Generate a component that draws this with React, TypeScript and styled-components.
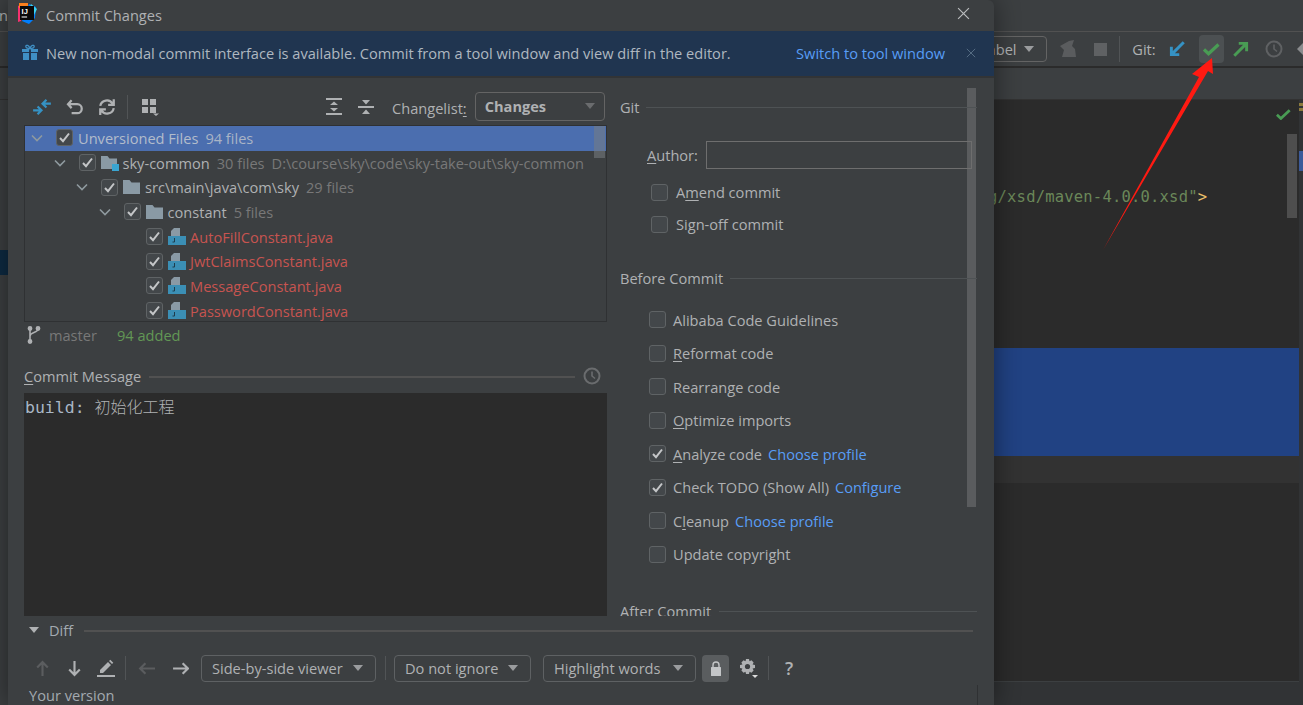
import React from "react";
import styled, { createGlobalStyle } from "styled-components";

const Global = createGlobalStyle`
  html, body { margin: 0; padding: 0; background: #2b2b2b; overflow: hidden; }
  * { box-sizing: border-box; }
`;

const Page = styled.div`
  position: relative;
  width: 1303px;
  height: 705px;
  overflow: hidden;
  display: flex;
  flex-direction: column;
  background: #2b2b2b;
  font-family: "Open Sans", "Noto Sans", sans-serif;
  font-size: 14.6px;
  color: #afb1b3;
`;

/* ---------- IDE behind the dialog ---------- */
const IdeTitle = styled.div`
  height: 32px;
  flex: none;
  background: #3c3f41;
  border-bottom: 1px solid #515151;
  line-height: 30px;
  margin-left: -1px;
`;
const IdeToolbar = styled.div`
  height: 36px;
  flex: none;
  display: flex;
  align-items: center;
  padding-left: 975px;
  background: #3c3f41;
  border-bottom: 2px solid #2b2b2b;
`;
const IdeCombo = styled.div`
  width: 72px;
  height: 26px;
  flex: none;
  display: flex;
  align-items: center;
  justify-content: space-between;
  padding: 0 12px 0 4px;
  border: 1px solid #646464;
  border-radius: 4px;
  color: #afb1b3;
`;
const Caret = styled.span<{ $c?: string }>`
  width: 0;
  height: 0;
  border-left: 5.5px solid transparent;
  border-right: 5.5px solid transparent;
  border-top: 6px solid ${(p) => p.$c || "#9a9c9e"};
  flex: none;
`;
const ToolSlot = styled.span<{ $w: number; $ml?: number; $active?: boolean }>`
  width: ${(p) => p.$w}px;
  height: 28px;
  margin-left: ${(p) => p.$ml || 0}px;
  flex: none;
  display: flex;
  align-items: center;
  justify-content: center;
  border-radius: 4px;
  background: ${(p) => (p.$active ? "#4c5052" : "transparent")};
  color: #afb1b3;
`;
const VSep = styled.span<{ $h?: number; $ml?: number; $mr?: number }>`
  width: 1px;
  height: ${(p) => p.$h || 24}px;
  flex: none;
  margin-left: ${(p) => p.$ml || 0}px;
  margin-right: ${(p) => p.$mr || 0}px;
  background: #515456;
`;
const IdeTabs = styled.div`
  height: 32px;
  flex: none;
  background: #3c3f41;
  border-bottom: 1px solid #323232;
`;
const IdeBody = styled.div`
  flex: 1;
  min-height: 0;
  display: flex;
`;
const SideEdge = styled.div`
  width: 994px;
  flex: none;
  background: #3c3f41;
  padding-top: 150px;
`;
const SideSelection = styled.div`
  width: 8px;
  height: 25px;
  background: #0d2a42;
`;
const Editor = styled.div`
  position: relative;
  flex: 1;
  display: flex;
  flex-direction: column;
  background: #2b2b2b;
`;
const CodeLine = styled.div`
  height: 20px;
  margin-top: 87px;
  margin-left: -6px;
  font-family: "DejaVu Sans Mono", "Liberation Mono", monospace;
  font-size: 15.5px;
  line-height: 20px;
  letter-spacing: 0.2px;
  color: #6a8759;
  white-space: nowrap;
`;
const Amber = styled.span`
  color: #e8bf6a;
`;
const SelectionBand = styled.div`
  height: 108px;
  margin-top: 141px;
  margin-right: 4px;
  background: #214283;
`;
const CurrentLine = styled.div`
  height: 27px;
  margin-right: 4px;
  background: #323232;
`;
const EditorFill = styled.div`
  flex: 1;
`;
const StatusBar = styled.div`
  height: 24px;
  flex: none;
  background: #313335;
  border-top: 1px solid #3c3f41;
`;
const EditorCheck = styled.span`
  position: absolute;
  left: 282px;
  top: 9px;
  display: flex;
`;
const EditorScroll = styled.div`
  position: absolute;
  right: 6px;
  top: 34px;
  width: 10px;
  height: 84px;
  background: #4e4e4e;
`;
const Stripe = styled.div`
  position: absolute;
  right: 0;
  top: 0;
  width: 4px;
  height: 100%;
  background: #313335;
`;
const Mark = styled.div<{ $top: number; $h: number; $c: string }>`
  position: absolute;
  left: 0;
  width: 4px;
  top: ${(p) => p.$top}px;
  height: ${(p) => p.$h}px;
  background: ${(p) => p.$c};
`;

/* ---------- dialog ---------- */
const Dialog = styled.div`
  position: absolute;
  left: 8px;
  top: 0;
  width: 986px;
  height: 705px;
  display: flex;
  flex-direction: column;
  background: #3c3f41;
  border-top-right-radius: 6px;
  box-shadow: 0 0 26px rgba(0, 0, 0, 0.45);
  overflow: hidden;
`;
const TitleRow = styled.div`
  height: 31px;
  flex: none;
  display: flex;
  align-items: center;
  padding: 0 24px 4px 9px;
`;
const TitleText = styled.span`
  margin-left: 9px;
  margin-top: 3px;
`;
const CloseBtn = styled.span`
  margin-left: auto;
  display: flex;
`;
const Banner = styled.div`
  height: 47px;
  flex: none;
  display: flex;
  align-items: center;
  padding: 0 18px 2px 14px;
  background: #203550;
  border-bottom: 2px solid #323436;
  color: #afb8c0;
`;
const BannerText = styled.span`
  margin-left: 8px;
`;
const Link = styled.a`
  color: #589df6;
`;
const BannerLink = styled(Link)`
  margin-left: auto;
`;
const BannerClose = styled.span`
  margin-left: 21px;
  display: flex;
`;
const Body = styled.div`
  flex: none;
  height: 538px;
  display: flex;
  overflow: hidden;
`;
const LeftCol = styled.div`
  width: 583px;
  margin-left: 16px;
  flex: none;
  display: flex;
  flex-direction: column;
`;
const TreeToolbar = styled.div`
  height: 47px;
  flex: none;
  display: flex;
  align-items: center;
  padding: 10px 0 0 2px;
`;
const ChangelistLabel = styled.span`
  margin-left: 10px;
  margin-top: 3px;
`;
const U = styled.span`
  text-decoration: underline;
  text-underline-offset: 2px;
  text-decoration-thickness: 1px;
`;
const ChangeCombo = styled.div`
  width: 130px;
  height: 29px;
  margin-left: 8px;
  margin-top: -1px;
  padding: 0 9px 1px;
  display: flex;
  align-items: center;
  justify-content: space-between;
  border: 1px solid #646464;
  border-radius: 4px;
  font-weight: 700;
`;
const Tree = styled.div`
  position: relative;
  height: 197px;
  flex: none;
  border: 1px solid #2f3133;
  overflow: hidden;
`;
const TreeRow = styled.div<{ $level: number; $selected?: boolean }>`
  height: 24.7px;
  display: flex;
  align-items: center;
  padding-left: ${(p) => 5 + p.$level * 22.5}px;
  padding-bottom: 1px;
  background: ${(p) => (p.$selected ? "#4b6eaf" : "transparent")};
  white-space: nowrap;
`;
const Chevron = styled.span`
  width: 26px;
  flex: none;
  display: flex;
`;
const TreeIcon = styled.span`
  margin-left: 5px;
  display: flex;
  flex: none;
`;
const Label = styled.span<{ $red?: boolean; $sel?: boolean }>`
  margin-left: ${(p) => (p.$sel ? 5 : 4)}px;
  color: ${(p) => (p.$red ? "#c75450" : p.$sel ? "#b2bccb" : "#afb1b3")};
`;
const Meta = styled.span<{ $light?: boolean }>`
  margin-left: 7px;
  color: ${(p) => (p.$light ? "#a9b4c6" : "#787878")};
`;
const TreeScroll = styled.div`
  position: absolute;
  right: 1px;
  top: 0;
  width: 11px;
  height: 32px;
  background: rgba(120, 125, 130, 0.55);
`;
const StatusLine = styled.div`
  height: 27px;
  flex: none;
  display: flex;
  align-items: center;
  padding: 0 0 1px 3px;
`;
const Branch = styled.span`
  margin-left: 8px;
  color: #787878;
`;
const Added = styled.span`
  margin-left: 20px;
  color: #629755;
`;
const MessageHead = styled.div`
  height: 20px;
  margin-top: 17px;
  flex: none;
  display: flex;
  align-items: center;
`;
const Line = styled.span<{ $ml: number; $thick?: boolean; $c?: string }>`
  position: relative;
  z-index: 1;
  top: ${(p) => (p.$thick ? 1 : 0)}px;
  flex: 1;
  height: ${(p) => (p.$thick ? 2 : 1)}px;
  margin-left: ${(p) => p.$ml}px;
  background: ${(p) => p.$c || "#515151"};
`;
const ClockSlot = styled.span`
  margin-left: 8px;
  margin-right: 6px;
  display: flex;
`;
const MessageBox = styled.div`
  height: 223px;
  margin-top: 7px;
  flex: none;
  padding: 3px 1px;
  background: #2b2b2b;
  font-family: "DejaVu Sans Mono", "Liberation Mono", "Noto Sans CJK SC", monospace;
  font-size: 16.5px;
  line-height: 20px;
  color: #a9b7c6;
`;
const Cjk = styled.span`
  font-family: "Noto Sans CJK SC", sans-serif;
  font-size: 16px;
  font-weight: 300;
  color: #afb1b3;
`;
const RightCol = styled.div`
  position: relative;
  width: 357px;
  margin-left: 13px;
  flex: none;
  padding-top: 19px;
`;
const RightScroll = styled.div`
  position: absolute;
  right: 1px;
  top: 10px;
  width: 9px;
  height: 419px;
  background: #5a5c5e;
`;
const SectionTitle = styled.div<{ $mt?: number }>`
  height: 20px;
  margin-top: ${(p) => p.$mt || 0}px;
  display: flex;
  align-items: center;
  white-space: nowrap;
`;
const AuthorRow = styled.div`
  height: 28px;
  margin-top: 24px;
  padding-left: 27px;
  padding-right: 5px;
  display: flex;
  align-items: center;
`;
const AuthorInput = styled.div`
  position: relative;
  z-index: 1;
  flex: 1;
  height: 28px;
  margin-left: 8px;
  border: 1px solid #6e6e6e;
`;
const CheckRow = styled.div<{ $h: number; $ml: number; $mt?: number; $gap: number }>`
  height: ${(p) => p.$h}px;
  margin-top: ${(p) => p.$mt || 0}px;
  padding-left: ${(p) => p.$ml}px;
  display: flex;
  align-items: center;
  gap: ${(p) => p.$gap}px;
  white-space: nowrap;
`;
const OptionLink = styled(Link)`
  margin-left: 6px;
`;
const OptionsSpacer = styled.div`
  height: 15px;
`;
const Box = styled.span`
  width: 17px;
  height: 17px;
  flex: none;
  display: flex;
  align-items: center;
  justify-content: center;
  background: #43474a;
  border: 1.5px solid #5f6365;
  border-radius: 3px;
`;
const DiffHead = styled.div`
  height: 30px;
  flex: none;
  margin-left: 21px;
  margin-right: 21px;
  padding-bottom: 2px;
  display: flex;
  align-items: center;
  color: #a3aab0;
`;
const DiffTri = styled.span`
  width: 0;
  height: 0;
  border-left: 5.5px solid transparent;
  border-right: 5.5px solid transparent;
  border-top: 6px solid #b0b2b4;
  margin-right: 10px;
`;
const DiffBar = styled.div`
  height: 28px;
  margin-top: 8px;
  flex: none;
  display: flex;
  align-items: center;
  padding-left: 18px;
`;
const DiffCombo = styled.div<{ $w: number; $ml: number }>`
  width: ${(p) => p.$w}px;
  height: 27px;
  margin-left: ${(p) => p.$ml}px;
  flex: none;
  display: flex;
  align-items: center;
  justify-content: space-between;
  padding: 0 12px 0 10px;
  border: 1px solid #5e6163;
  border-radius: 4px;
  white-space: nowrap;
`;
const LockBtn = styled.span`
  width: 27px;
  height: 27px;
  margin-left: 6px;
  flex: none;
  display: flex;
  align-items: center;
  justify-content: center;
  background: #5a5d5f;
  border-radius: 4px;
`;
const HelpMark = styled.span`
  width: 40px;
  flex: none;
  text-align: center;
  font-size: 18px;
  font-weight: 600;
  color: #afb1b3;
`;
const YourVersion = styled.div`
  margin-top: 3px;
  margin-left: 21px;
  line-height: 20px;
  color: #a3aab0;
`;
const BottomTick = styled.div`
  position: absolute;
  left: 969px;
  top: 685px;
  width: 1px;
  height: 20px;
  background: #2f3133;
`;
const RedArrow = styled.svg`
  position: absolute;
  left: 0;
  top: 0;
  pointer-events: none;
`;

/* ---------- icons ---------- */
const Stroke = ({ size = 16, c = "#afb1b3", w = 2, children }: { size?: number; c?: string; w?: number; children: React.ReactNode }) => (
  <svg width={size} height={size} viewBox="0 0 16 16" fill="none" stroke={c} strokeWidth={w} strokeLinecap="butt" strokeLinejoin="miter">
    {children}
  </svg>
);
const Check = ({ c = "#c4c6c8", size = 13 }: { c?: string; size?: number }) => (
  <svg width={size} height={size} viewBox="0 0 13 13" fill="none" stroke={c} strokeWidth="2">
    <path d="M2 7l3 3.2L11 2.5" />
  </svg>
);
const GreenCheck = ({ w = 17 }: { w?: number }) => (
  <svg width={w} height={(w * 13) / 17} viewBox="0 0 17 13" fill="none" stroke="#499c54" strokeWidth="3.2">
    <path d="M1 6.5l4.5 4.2L15.5 1.5" />
  </svg>
);
const BoxCheck = ({ on }: { on?: boolean }) => <Box>{on && <Check />}</Box>;
const ChevronDown = () => (
  <svg width="14" height="14" viewBox="0 0 14 14" fill="none" stroke="#8f9a9f" strokeWidth="1.6">
    <path d="M2 4.5l5 5 5-5" />
  </svg>
);
const Folder = () => (
  <svg width="18" height="16" viewBox="0 0 18 16" fill="#8a9aa5">
    <path d="M0 1h6.5l2 2.5H17V15H0z" />
  </svg>
);
const ModuleFolder = () => (
  <svg width="18" height="18" viewBox="0 0 18 18">
    <path fill="#8a9aa5" d="M0 2h6.5l2 2.5H16V15H0z" />
    <rect x="11" y="10" width="7" height="7" fill="#3aa5d1" />
  </svg>
);
const JavaFile = () => (
  <svg width="18" height="19" viewBox="0 0 18 19">
    <path fill="#8a9aa5" d="M6 1h6v8H3V4z" />
    <rect x="0" y="9" width="18" height="9" fill="#3b8fb5" />
    <path stroke="#1f3c4c" fill="none" strokeWidth="1" d="M6.5 11v4H4.5" />
  </svg>
);
const JetIcon = () => (
  <svg width="20" height="21" viewBox="0 0 20 21">
    <path fill="#f5316f" d="M1 3l6-3 2 2-5 16-3 1z" />
    <path fill="#fc801d" d="M2 0h9v5H2z" />
    <path fill="#007efe" d="M12 1l7 3-1 11-6 6-7-3z" />
    <path fill="#3bd4f0" d="M14 1l6 5-4 8-4-6z" />
    <rect x="3" y="3" width="14" height="14" fill="#0a0a0a" />
    <text x="4.6" y="10.5" fontFamily="Liberation Sans" fontSize="7.5" fontWeight="700" fill="#ffffff">IJ</text>
    <rect x="4.6" y="13.5" width="5.5" height="1" fill="#ffffff" />
  </svg>
);
const Gift = () => (
  <svg width="16" height="17" viewBox="0 0 16 17" fill="#3f8fc4">
    <rect x="0" y="5" width="7" height="3" />
    <rect x="9" y="5" width="7" height="3" />
    <rect x="1" y="9" width="6" height="7" />
    <rect x="9" y="9" width="6" height="7" />
    <path fill="none" stroke="#3f8fc4" strokeWidth="1.3" d="M8 4.5C5 4.5 3.5 3.6 3.8 2.2 4.2.6 7 1 8 4.5c1-3.5 3.8-3.9 4.2-2.3.3 1.4-1.2 2.3-4.2 2.3z" />
  </svg>
);
const XIcon = ({ size, c }: { size: number; c: string }) => (
  <svg width={size} height={size} viewBox="0 0 12 12" fill="none" stroke={c} strokeWidth="1.1">
    <path d="M1 1l10 10M11 1L1 11" />
  </svg>
);
const Clock = ({ c = "#6a6c6e", size = 18 }: { c?: string; size?: number }) => (
  <svg width={size} height={size} viewBox="0 0 18 18" fill="none" stroke={c} strokeWidth="2">
    <circle cx="9" cy="9" r="7.5" />
    <path d="M9 4.5V9l3 2.5" strokeWidth="1.6" />
  </svg>
);

const TreeData = [
  { level: 0, label: "Unversioned Files", meta: "94 files", selected: true, chevron: true },
  { level: 1, label: "sky-common", meta: "30 files", extra: "D:\\course\\sky\\code\\sky-take-out\\sky-common", chevron: true, icon: "module" },
  { level: 2, label: "src\\main\\java\\com\\sky", meta: "29 files", chevron: true, icon: "folder" },
  { level: 3, label: "constant", meta: "5 files", chevron: true, icon: "folder" },
  { level: 4, label: "AutoFillConstant.java", red: true, icon: "java" },
  { level: 4, label: "JwtClaimsConstant.java", red: true, icon: "java" },
  { level: 4, label: "MessageConstant.java", red: true, icon: "java" },
  { level: 4, label: "PasswordConstant.java", red: true, icon: "java" },
];

const Options: { text: React.ReactNode; on?: boolean; link?: string }[] = [
  { text: "Alibaba Code Guidelines" },
  { text: <><U>R</U>eformat code</> },
  { text: <>Rearran<U>g</U>e code</> },
  { text: <><U>O</U>ptimize imports</> },
  { text: <><U>A</U>nalyze code</>, on: true, link: "Choose profile" },
  { text: "Check TODO (Show All)", on: true, link: "Configure" },
  { text: <>C<U>l</U>eanup</>, link: "Choose profile" },
  { text: "Update copyright" },
];

export default function App() {
  return (
    <Page>
      <Global />
      <IdeTitle>n</IdeTitle>
      <IdeToolbar>
        <IdeCombo>
          Label
          <Caret />
        </IdeCombo>
        <ToolSlot $w={20} $ml={11}>
          <svg width="20" height="20" viewBox="0 0 20 20" fill="#5a5c5e">
            <path d="M2 7l9-5 5-1-2 6 3 3 1 8H4l2-7z" />
          </svg>
        </ToolSlot>
        <ToolSlot $w={16} $ml={14}>
          <svg width="13" height="13" viewBox="0 0 13 13"><rect width="13" height="13" fill="#5f6163" /></svg>
        </ToolSlot>
        <VSep $h={26} $ml={11} />
        <ToolSlot $w={24} $ml={12}>Git:</ToolSlot>
        <ToolSlot $w={18} $ml={12}>
          <Stroke size={18} c="#3592c4" w={2.6}>
            <path d="M14 2L3 13M3 6v7h7" />
          </Stroke>
        </ToolSlot>
        <ToolSlot $w={25} $ml={13} $active>
          <GreenCheck />
        </ToolSlot>
        <ToolSlot $w={18} $ml={8}>
          <Stroke size={18} c="#499c54" w={2.6}>
            <path d="M2 14L13 3M6 3h7v7" />
          </Stroke>
        </ToolSlot>
        <ToolSlot $w={18} $ml={15}>
          <Clock c="#5f6163" />
        </ToolSlot>
        <ToolSlot $w={16} $ml={13}>
          <svg width="16" height="16" viewBox="0 0 16 16" fill="#8a8c8e"><path d="M8 1l7 7-7 7-7-7z" /></svg>
        </ToolSlot>
      </IdeToolbar>
      <IdeTabs />
      <IdeBody>
        <SideEdge>
          <SideSelection />
        </SideEdge>
        <Editor>
          <CodeLine>
            g/xsd/maven-4.0.0.xsd"<Amber>&gt;</Amber>
          </CodeLine>
          <SelectionBand />
          <CurrentLine />
          <EditorFill />
          <StatusBar />
          <EditorCheck>
            <GreenCheck w={15} />
          </EditorCheck>
          <EditorScroll />
          <Stripe>
            <Mark $top={3} $h={3} $c="#8c7a3d" />
            <Mark $top={8} $h={3} $c="#8c7a3d" />
            <Mark $top={51} $h={20} $c="#3b5a9a" />
          </Stripe>
        </Editor>
      </IdeBody>

      <Dialog>
        <TitleRow>
          <JetIcon />
          <TitleText>Commit Changes</TitleText>
          <CloseBtn>
            <XIcon size={13} c="#b8babc" />
          </CloseBtn>
        </TitleRow>
        <Banner>
          <Gift />
          <BannerText>New non-modal commit interface is available. Commit from a tool window and view diff in the editor.</BannerText>
          <BannerLink>Switch to tool window</BannerLink>
          <BannerClose>
            <XIcon size={10} c="#5a7288" />
          </BannerClose>
        </Banner>
        <Body>
          <LeftCol>
            <TreeToolbar>
              <ToolSlot $w={32}>
                <svg width="20" height="20" viewBox="0 0 18 18" fill="none" stroke="#3592c4" strokeWidth="2">
                  <path d="M8 9L1 9M5 5.5L8.5 9 5 12.5" transform="translate(0 3)" />
                  <path d="M10 9h7M13 5.5L9.5 9l3.5 3.5" transform="translate(0 -3)" />
                </svg>
              </ToolSlot>
              <ToolSlot $w={32} $ml={1}>
                <Stroke size={18}>
                  <path d="M5 2L1.8 5.5 5 9M2 5.5h8a4 4 0 010 8H5" />
                </Stroke>
              </ToolSlot>
              <ToolSlot $w={32}>
                <Stroke size={18}>
                  <path d="M2 7a6 6 0 0111-2M14 9a6 6 0 01-11 2M9 6h5V1M7 10H2v5" />
                </Stroke>
              </ToolSlot>
              <VSep $h={24} $ml={4} />
              <ToolSlot $w={32} $ml={6}>
                <svg width="18" height="18" viewBox="0 0 18 18" fill="#afb1b3">
                  <rect x="1" y="1" width="6" height="6" />
                  <rect x="9" y="1" width="6" height="6" />
                  <rect x="1" y="9" width="6" height="6" />
                  <rect x="9" y="9" width="6" height="6" />
                  <path d="M12 15.5h6l-3 2.5z" />
                </svg>
              </ToolSlot>
              <ToolSlot $w={32} $ml={152}>
                <svg width="16" height="18" viewBox="0 0 16 18" fill="#afb1b3">
                  <rect x="0" y="0" width="16" height="2" />
                  <rect x="0" y="15" width="16" height="2" />
                  <path d="M8 3.5l4 3.5H4zM8 13.5L4 10h8z" />
                </svg>
              </ToolSlot>
              <ToolSlot $w={32}>
                <svg width="16" height="18" viewBox="0 0 16 18" fill="#afb1b3">
                  <rect x="0" y="8" width="16" height="2" />
                  <path d="M8 6.5L4 2h8zM8 11.5l4 4.5H4z" />
                </svg>
              </ToolSlot>
              <ChangelistLabel>
                Changelist<U>:</U>
              </ChangelistLabel>
              <ChangeCombo>
                Changes
                <Caret $c="#6a6c6e" />
              </ChangeCombo>
            </TreeToolbar>
            <Tree>
              {TreeData.map((r) => (
                <TreeRow key={r.label} $level={r.level} $selected={r.selected}>
                  <Chevron>{r.chevron && <ChevronDown />}</Chevron>
                  <Box>
                    <Check />
                  </Box>
                  {r.icon && (
                    <TreeIcon>
                      {r.icon === "module" ? <ModuleFolder /> : r.icon === "folder" ? <Folder /> : <JavaFile />}
                    </TreeIcon>
                  )}
                  <Label $red={r.red} $sel={r.selected}>{r.label}</Label>
                  {r.meta && <Meta $light={r.selected}>{r.meta}</Meta>}
                  {r.extra && <Meta>{r.extra}</Meta>}
                </TreeRow>
              ))}
              <TreeScroll />
            </Tree>
            <StatusLine>
              <svg width="14" height="18" viewBox="0 0 14 18" fill="none" stroke="#afb1b3" strokeWidth="1.6">
                <path d="M3 3v12M11 3c0 4-8 3-8 7" />
                <circle cx="3" cy="2.5" r="1.6" fill="#afb1b3" />
                <circle cx="11" cy="2.5" r="1.6" fill="#afb1b3" />
                <circle cx="3" cy="15.5" r="1.6" fill="#afb1b3" />
              </svg>
              <Branch>master</Branch>
              <Added>94 added</Added>
            </StatusLine>
            <MessageHead>
              <span>
                <U>C</U>ommit Message
              </span>
              <Line $ml={8} $thick />
              <ClockSlot>
                <Clock />
              </ClockSlot>
            </MessageHead>
            <MessageBox>
              build: <Cjk>初始化工程</Cjk>
            </MessageBox>
          </LeftCol>
          <RightCol>
            <RightScroll />
            <SectionTitle>
              Git
              <Line $ml={6} $c="#4e5254" />
            </SectionTitle>
            <AuthorRow>
              <span>
                <U>A</U>uthor:
              </span>
              <AuthorInput />
            </AuthorRow>
            <CheckRow $h={32} $ml={31} $mt={7} $gap={8}>
              <BoxCheck />
              <span>
                A<U>m</U>end commit
              </span>
            </CheckRow>
            <CheckRow $h={32} $ml={31} $gap={8}>
              <BoxCheck />
              <span>
                Si<U>g</U>n-off commit
              </span>
            </CheckRow>
            <SectionTitle $mt={28}>
              Before Commit
              <Line $ml={7} $c="#4e5254" />
            </SectionTitle>
            <OptionsSpacer />
            {Options.map((o, i) => (
              <CheckRow key={i} $h={33.5} $ml={29} $gap={7}>
                <BoxCheck on={o.on} />
                <span>
                  {o.text}
                  {o.link && <OptionLink>{o.link}</OptionLink>}
                </span>
              </CheckRow>
            ))}
            <SectionTitle $mt={30}>
              After Commit
              <Line $ml={8} $c="#4e5254" />
            </SectionTitle>
          </RightCol>
        </Body>
        <DiffHead>
          <DiffTri />
          Diff
          <Line $ml={11} $thick />
        </DiffHead>
        <DiffBar>
          <ToolSlot $w={32}>
            <Stroke size={17} c="#5b5d5f">
              <path d="M8 15V2M3 7l5-5 5 5" />
            </Stroke>
          </ToolSlot>
          <ToolSlot $w={32}>
            <Stroke size={17}>
              <path d="M8 1v13M3 9l5 5 5-5" />
            </Stroke>
          </ToolSlot>
          <ToolSlot $w={32}>
            <svg width="18" height="18" viewBox="0 0 18 18" fill="#afb1b3">
              <path d="M3 11L11 3l3 3-8 8H3zM12 2l1.3-1.3 3 3L15 5z" />
              <rect x="0" y="16" width="18" height="2" />
            </svg>
          </ToolSlot>
          <VSep $h={24} $ml={3} />
          <ToolSlot $w={32} $ml={4}>
            <Stroke size={17} c="#5b5d5f">
              <path d="M16 8H2M7 3L2 8l5 5" />
            </Stroke>
          </ToolSlot>
          <ToolSlot $w={32} $ml={2}>
            <Stroke size={17}>
              <path d="M1 8h14M10 3l5 5-5 5" />
            </Stroke>
          </ToolSlot>
          <DiffCombo $w={175} $ml={5}>
            Side-by-side viewer
            <Caret />
          </DiffCombo>
          <VSep $h={24} $ml={9} />
          <DiffCombo $w={137} $ml={8}>
            Do not ignore
            <Caret />
          </DiffCombo>
          <DiffCombo $w={153} $ml={12}>
            Highlight words
            <Caret />
          </DiffCombo>
          <LockBtn>
            <svg width="12" height="15" viewBox="0 0 12 15">
              <path fill="none" stroke="#c4c6c8" strokeWidth="1.4" d="M3 7V4a3 3 0 016 0v3" />
              <rect x="1" y="6" width="10" height="9" rx="0.5" fill="#c4c6c8" />
            </svg>
          </LockBtn>
          <ToolSlot $w={30} $ml={4}>
            <svg width="20" height="20" viewBox="0 0 20 20">
              <path fill="#afb1b3" d="M8 1h3l.5 2.2 2-.9 2.1 2.1-1 2 2.4.6v3l-2.4.6 1 2-2.1 2.1-2-1L11 16H8l-.5-2.3-2 1-2.1-2.1 1-2L2 10V7l2.4-.6-1-2 2.1-2.1 2 .9z" />
              <circle cx="9.5" cy="8.5" r="2.6" fill="#3c3f41" />
              <path fill="#dcdcdc" d="M14 17h6l-3 3z" />
            </svg>
          </ToolSlot>
          <VSep $h={24} $ml={5} />
          <HelpMark>?</HelpMark>
        </DiffBar>
        <YourVersion>Your version</YourVersion>
        <BottomTick />
      </Dialog>

      <RedArrow width="1303" height="705" viewBox="0 0 1303 705">
        <path fill="#ff1a12" d="M1103 250L1199 77 1192 74 1212 58 1213 74 1208 71z" />
      </RedArrow>
    </Page>
  );
}
